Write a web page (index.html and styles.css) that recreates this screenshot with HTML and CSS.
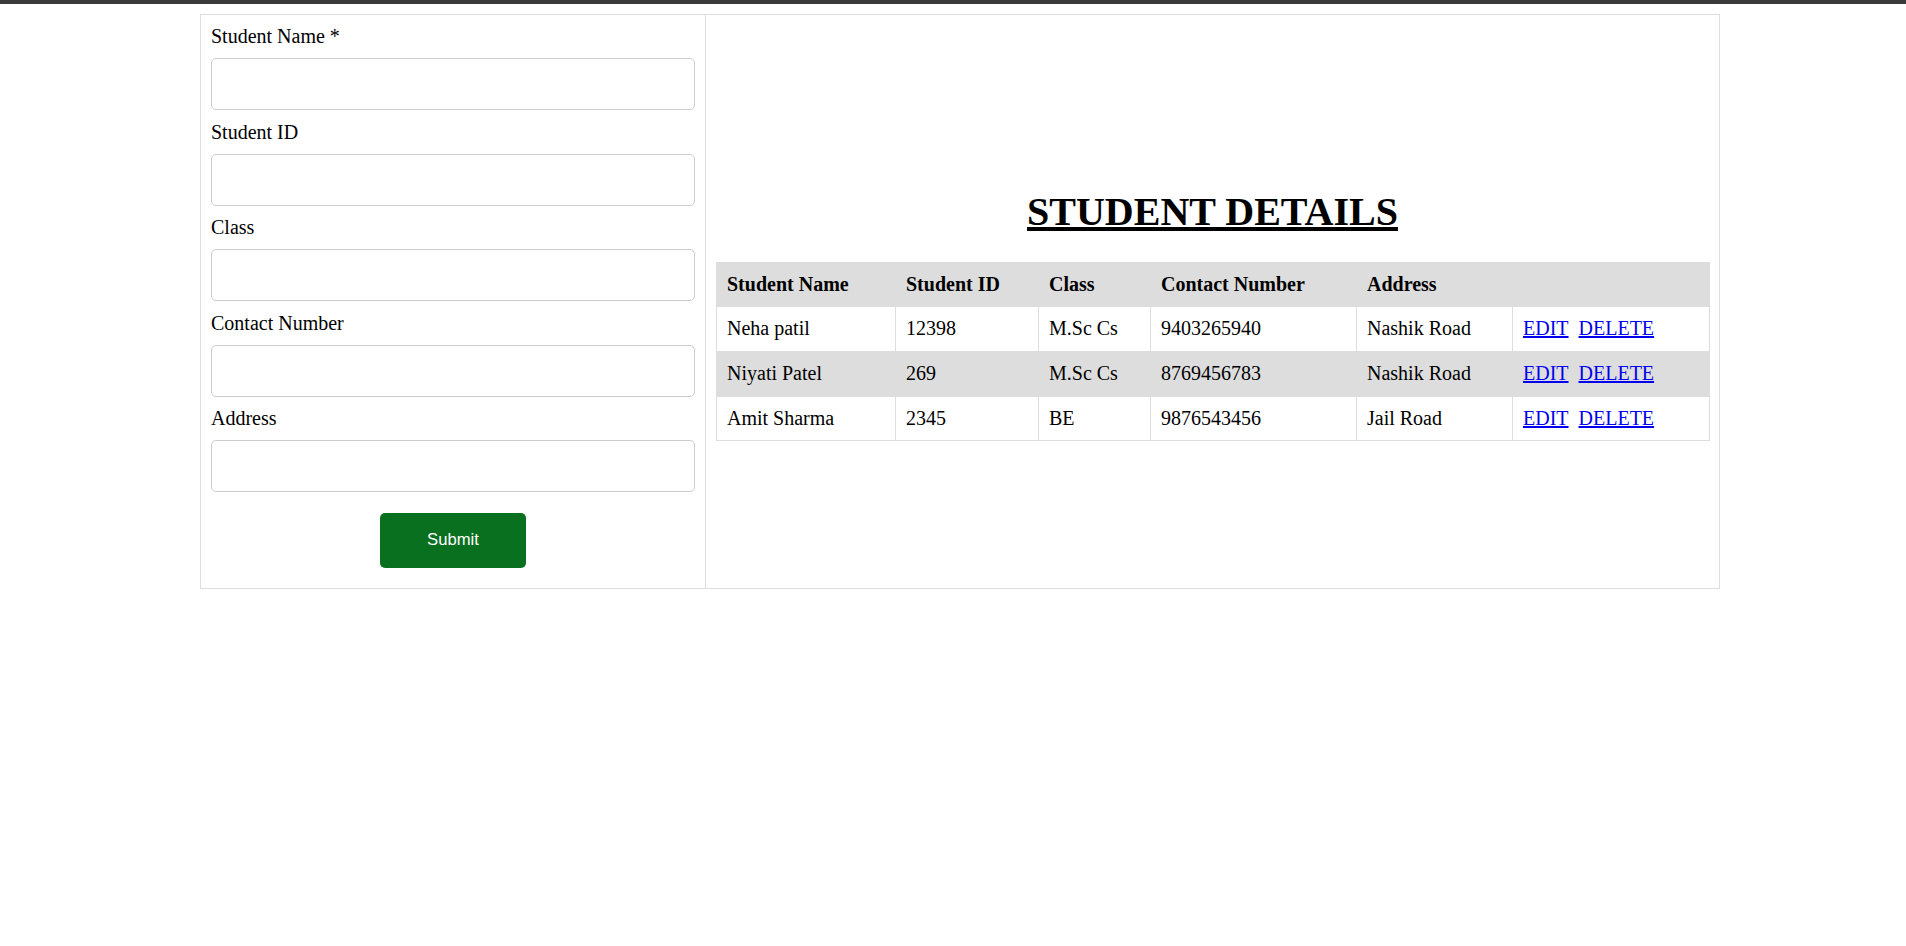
FILE: index.html
```html
<!DOCTYPE html>
<html>
<head>
<meta charset="utf-8">
<title>Student Details</title>
<link rel="stylesheet" href="styles.css">
</head>
<body>
<div class="topbar"></div>
<div class="page">
  <div class="panel">
    <form class="form-col">
      <label class="field-label">Student Name *</label>
      <input class="field-input" type="text">
      <label class="field-label">Student ID</label>
      <input class="field-input" type="text">
      <label class="field-label">Class</label>
      <input class="field-input" type="text">
      <label class="field-label">Contact Number</label>
      <input class="field-input" type="text">
      <label class="field-label">Address</label>
      <input class="field-input" type="text">
      <div class="submit-row">
        <button class="submit-btn" type="button">Submit</button>
      </div>
    </form>
    <div class="list-col">
      <h1 class="title">STUDENT DETAILS</h1>
      <table class="students">
        <colgroup>
          <col class="c-name"><col class="c-id"><col class="c-class"><col class="c-contact"><col class="c-addr"><col class="c-act">
        </colgroup>
        <thead>
          <tr><th>Student Name</th><th>Student ID</th><th>Class</th><th>Contact Number</th><th>Address</th><th></th></tr>
        </thead>
        <tbody>
          <tr><td>Neha patil</td><td>12398</td><td>M.Sc Cs</td><td>9403265940</td><td>Nashik Road</td><td class="actions"><a href="#">EDIT</a><a href="#">DELETE</a></td></tr>
          <tr><td>Niyati Patel</td><td>269</td><td>M.Sc Cs</td><td>8769456783</td><td>Nashik Road</td><td class="actions"><a href="#">EDIT</a><a href="#">DELETE</a></td></tr>
          <tr><td>Amit Sharma</td><td>2345</td><td>BE</td><td>9876543456</td><td>Jail Road</td><td class="actions"><a href="#">EDIT</a><a href="#">DELETE</a></td></tr>
        </tbody>
      </table>
    </div>
  </div>
</div>
</body>
</html>
```

FILE: styles.css
```css
html, body {
  margin: 0;
  padding: 0;
  background: #ffffff;
}
body {
  font-family: "Liberation Serif", "Times New Roman", serif;
  font-size: 20px;
  color: #000;
}
.topbar {
  height: 4px;
  background: #3a3a3a;
}
.page {
  padding: 10px 0 0 200px;
}
.panel {
  width: 1520px;
  box-sizing: border-box;
  border: 1px solid #dddddd;
  display: flex;
}
.form-col {
  width: 505px;
  flex: none;
  box-sizing: border-box;
  border-right: 1px solid #dddddd;
  padding: 10px;
  margin: 0;
}
.field-label {
  display: block;
  line-height: 23px;
  height: 23px;
}
.field-input {
  display: block;
  box-sizing: border-box;
  width: 100%;
  height: 52px;
  margin: 10px 0 10.5px;
  padding: 15px;
  border: 1px solid #cccccc;
  border-radius: 5px;
  font-family: "Liberation Sans", Arial, sans-serif;
  font-size: 16.67px;
  background: #fff;
}
.submit-row {
  display: flex;
  justify-content: center;
  padding: 10.5px 0 10px;
}
.submit-btn {
  width: 146px;
  height: 55px;
  padding: 0 0 2px;
  border: none;
  border-radius: 5px;
  background: #08701f;
  color: #ffffff;
  font-family: "Liberation Sans", Arial, sans-serif;
  font-size: 16.67px;
  cursor: pointer;
}
.list-col {
  flex: 1;
  min-width: 0;
  padding: 10px;
  display: flex;
  flex-direction: column;
  justify-content: center;
}
.title {
  margin: 27px 0;
  text-align: center;
  font-size: 40px;
  line-height: 46px;
  font-weight: bold;
  text-decoration: underline;
}
.students {
  width: 100%;
  border-collapse: collapse;
  table-layout: fixed;
}
.c-name { width: 179px; }
.c-id { width: 143px; }
.c-class { width: 112px; }
.c-contact { width: 206px; }
.c-addr { width: 156px; }
.c-act { width: 197px; }
.students th,
.students td {
  border: 1px solid #dddddd;
  text-align: left;
  padding: 10px;
  line-height: 23.6px;
  white-space: nowrap;
}
.students th {
  font-weight: bold;
}
.students thead tr,
.students tbody tr:nth-child(even) {
  background: #dddddd;
}
.actions a {
  color: #0000ee;
  text-decoration: underline;
}
.actions a + a {
  margin-left: 10px;
}
```
